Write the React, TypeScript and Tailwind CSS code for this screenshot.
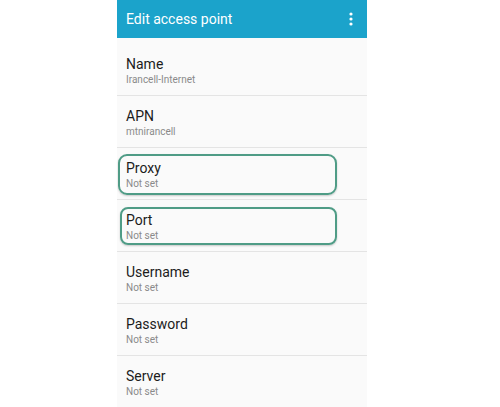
const ROWS = [
  { title: 'Name', value: 'Irancell-Internet' },
  { title: 'APN', value: 'mtnirancell' },
  { title: 'Proxy', value: 'Not set', box: 'proxy' },
  { title: 'Port', value: 'Not set', box: 'port' },
  { title: 'Username', value: 'Not set' },
  { title: 'Password', value: 'Not set' },
  { title: 'Server', value: 'Not set' },
]

export default function App() {
  return (
    <div className="h-[407px] w-[500px] overflow-hidden bg-white font-['Roboto',sans-serif]">
      <div className="ml-[117px] flex h-full w-[250px] flex-col bg-[#fafafa]">
        {/* app bar */}
        <div className="flex h-[38px] shrink-0 items-center justify-between bg-[#1ba3cb] pl-[9px] pr-[14px]">
          <span className="text-[14px] text-white">Edit access point</span>
          <svg width="4" height="14" viewBox="0 0 4 14" fill="white">
            <circle cx="2" cy="2" r="1.6" />
            <circle cx="2" cy="7" r="1.6" />
            <circle cx="2" cy="12" r="1.6" />
          </svg>
        </div>
        <div className="h-[6px] shrink-0" />
        {ROWS.map((r, i) => (
          <div key={r.title}
            className={`relative h-[52px] shrink-0 pl-[9px] pt-[11px] ${i < ROWS.length - 1 ? 'border-b border-[#e4e4e4]' : ''}`}>
            <div className="text-[14px] leading-[18px] text-[#1c1c1c]">{r.title}</div>
            <div className="text-[10px] leading-[13px] text-[#8a8a8a]">{r.value}</div>
            {r.box === 'proxy' && (
              <div className="absolute left-[1px] top-[6px] h-[41px] w-[219px] rounded-[9px] border-2 border-[#4f9c86] shadow-[0_1px_2px_rgba(0,0,0,0.2)]" />
            )}
            {r.box === 'port' && (
              <div className="absolute left-[3px] top-[7px] h-[38px] w-[217px] rounded-[8px] border-2 border-[#4f9c86] shadow-[0_1px_2px_rgba(0,0,0,0.2)]" />
            )}
          </div>
        ))}
      </div>
    </div>
  )
}
